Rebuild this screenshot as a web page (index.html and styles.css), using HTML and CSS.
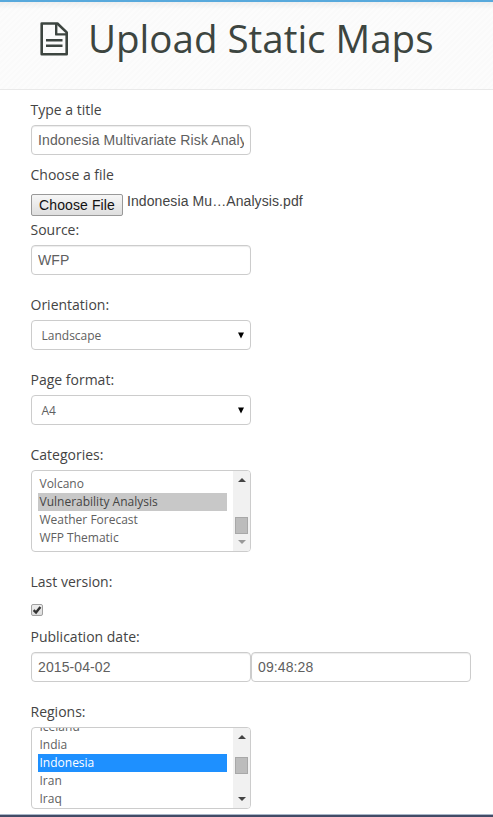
FILE: index.html
```html
<!DOCTYPE html>
<html lang="en">
<head>
<meta charset="utf-8">
<title>Upload Static Maps</title>
<link rel="stylesheet" href="styles.css">
</head>
<body>
<header class="page-header">
  <svg class="page-icon" width="28" height="34" viewBox="0 0 28 34" fill="none" stroke="#3d4540" stroke-width="2.6" stroke-linejoin="round">
    <path d="M1.7 1.5H17.4L26.7 10.4V32.3H1.7Z"/>
    <path d="M16.2 1.5V12.4H26.7M6 18.2H22.5M6 23.7H22.5" stroke-width="2.4"/>
  </svg>
  <h1 class="page-title">Upload Static Maps</h1>
</header>
<form class="upload-form">
  <div class="field">
    <label class="label" for="title">Type a title</label>
    <input class="input" id="title" type="text" value="Indonesia Multivariate Risk Analysis">
  </div>
  <div class="field field-tight">
    <span class="label">Choose a file</span>
    <div class="file-row">
      <button class="file-button" type="button">Choose File</button>
      <span class="file-name">Indonesia Mu…Analysis.pdf</span>
    </div>
  </div>
  <div class="field field-wide">
    <label class="label" for="source">Source:</label>
    <input class="input" id="source" type="text" value="WFP">
  </div>
  <div class="field field-wide">
    <span class="label">Orientation:</span>
    <div class="select"><span>Landscape</span><svg width="8" height="7" viewBox="0 0 8 7"><path d="M1 .5H7L4 6.5Z"/></svg></div>
  </div>
  <div class="field field-wide">
    <span class="label">Page format:</span>
    <div class="select"><span>A4</span><svg width="8" height="7" viewBox="0 0 8 7"><path d="M1 .5H7L4 6.5Z"/></svg></div>
  </div>
  <div class="field field-wide">
    <span class="label">Categories:</span>
    <div class="listbox">
      <ul class="options">
        <li>Volcano</li>
        <li class="chosen">Vulnerability Analysis</li>
        <li>Weather Forecast</li>
        <li>WFP Thematic</li>
      </ul>
      <div class="scrollbar scrollbar-end">
        <svg width="8" height="4" viewBox="0 0 8 4"><path d="M0 4L4 0L8 4Z"/></svg>
        <span class="thumb"></span>
        <svg class="disabled" width="8" height="4" viewBox="0 0 8 4"><path d="M0 0H8L4 4Z"/></svg>
      </div>
    </div>
  </div>
  <div class="field">
    <span class="label">Last version:</span>
    <div class="check-row">
      <span class="checkbox"><svg width="10" height="10" viewBox="0 0 10 10" fill="none" stroke="#333" stroke-width="2.4"><path d="M1.6 5.2L4 7.4L8.4 2"/></svg></span>
    </div>
  </div>
  <div class="field field-wide">
    <span class="label">Publication date:</span>
    <div class="date-row">
      <input class="input" type="text" value="2015-04-02">
      <input class="input" type="text" value="09:48:28">
    </div>
  </div>
  <div class="field">
    <span class="label">Regions:</span>
    <div class="listbox">
      <ul class="options options-scrolled">
        <li>Iceland</li>
        <li>India</li>
        <li class="active">Indonesia</li>
        <li>Iran</li>
        <li>Iraq</li>
      </ul>
      <div class="scrollbar scrollbar-middle">
        <svg width="8" height="4" viewBox="0 0 8 4"><path d="M0 4L4 0L8 4Z"/></svg>
        <span class="thumb"></span>
        <svg width="8" height="4" viewBox="0 0 8 4"><path d="M0 0H8L4 4Z"/></svg>
      </div>
    </div>
  </div>
</form>
<footer class="page-footer"></footer>
</body>
</html>
```
FILE: styles.css
```css
* {
  box-sizing: border-box;
}

body {
  margin: 0;
  height: 817px;
  overflow: hidden;
  display: flex;
  flex-direction: column;
  background: #fff;
  color: #444;
  font: 14px/20px "Open Sans", sans-serif;
}

.page-header {
  flex: none;
  height: 90px;
  display: flex;
  align-items: flex-start;
  padding-left: 40px;
  border-top: 2px solid #58a9dc;
  border-bottom: 1px solid #e9e9e9;
  background:
    linear-gradient(rgba(0, 0, 0, .05), transparent 7px),
    repeating-linear-gradient(135deg, #fcfcfc 0 2px, #fafafa 2px 4px);
}

.page-icon {
  margin: 20px 20px 0 0;
}

.page-title {
  margin: 16px 0 0;
  color: #3d4540;
  font-size: 38.5px;
  font-weight: 400;
  line-height: 40px;
  white-space: nowrap;
}

.upload-form {
  flex: none;
  height: 724px;
  padding: 10px 0 0 31px;
}

.field {
  margin-bottom: 10px;
}

.field-tight {
  margin-bottom: 0;
}

.field-wide {
  margin-bottom: 20px;
}

.label {
  display: block;
  margin: 0 0 5px -.5px;
}

.input,
.select,
.listbox {
  display: block;
  width: 220px;
  height: 30px;
  border: 1px solid #ccc;
  border-radius: 4px;
  background: #fff;
  color: #606060;
}

.input {
  padding: 4px 6px;
  font: 14px/20px "Liberation Sans", sans-serif;
  letter-spacing: .1px;
  box-shadow: inset 0 1px 1px rgba(0, 0, 0, .075);
}

.file-row {
  display: flex;
  align-items: flex-start;
  height: 30px;
}

.file-button {
  width: 92px;
  height: 22px;
  margin: 4px 4px 0 0;
  padding: 0;
  border: 1px solid #999;
  border-radius: 2px;
  background: linear-gradient(#f6f6f6, #dedede);
  color: #111;
  font: 14px/20px "Liberation Sans", sans-serif;
  letter-spacing: .1px;
}

.file-name {
  margin-top: 1px;
  font-family: "Liberation Sans", sans-serif;
  letter-spacing: .09px;
}

.select {
  display: flex;
  align-items: center;
  justify-content: space-between;
  padding: 1px 5px 0 9.5px;
  font-size: 12px;
}

.select svg {
  margin-bottom: 1px;
}

.listbox {
  display: flex;
  justify-content: space-between;
  height: 82px;
  overflow: hidden;
  font-size: 12px;
  line-height: 18px;
}

.options {
  width: 189px;
  margin: 4px 0 0 6px;
  padding: 0;
  list-style: none;
}

.options-scrolled {
  margin-top: -10px;
}

.options li {
  height: 18px;
  padding-left: 1.5px;
}

.options .chosen {
  background: #c8c8c8;
  color: #444;
}

.options .active {
  background: #1e90ff;
  color: #fff;
}

.scrollbar {
  display: flex;
  flex-direction: column;
  align-items: center;
  width: 17px;
  padding-top: 7px;
  background: #f1f1f1;
}

.scrollbar svg {
  flex: none;
  fill: #444;
}

.scrollbar .disabled {
  fill: #999;
}

.thumb {
  flex: none;
  width: 13px;
  height: 17px;
  border: 1px solid #a8a8a8;
  background: #bcbcbc;
}

.scrollbar-end .thumb {
  margin: 35px 0 6px;
}

.scrollbar-middle .thumb {
  margin: 18px 0 23px;
}

.check-row {
  height: 20px;
  padding-top: 7px;
}

.checkbox {
  display: block;
  width: 12px;
  height: 12px;
  border: 1px solid #a0a0a0;
  border-radius: 2px;
  background: linear-gradient(#eee, #ddd);
}

.checkbox svg {
  display: block;
}

.date-row {
  display: flex;
}

.page-footer {
  flex: none;
  height: 3px;
  border-top: 1px solid #a9b6c8;
  background: #424b66;
}
```
